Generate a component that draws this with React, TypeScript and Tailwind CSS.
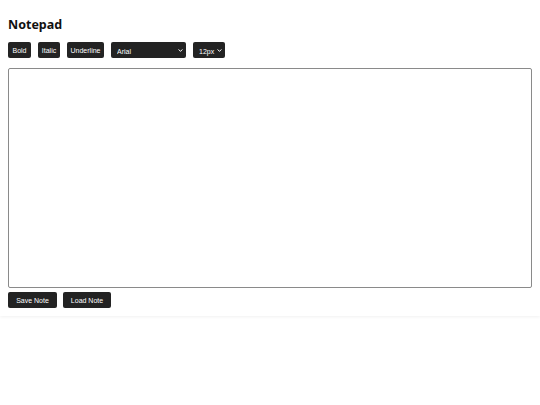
import React from "react";

const Chevron = () => (
  <span className="pointer-events-none absolute inset-y-0 right-[3px] flex items-center">
    <svg className="block" width="5" height="3" viewBox="0 0 5 3">
      <path d="M0.6 0.4 L2.5 2.4 L4.4 0.4" stroke="white" strokeWidth="1" fill="none" />
    </svg>
  </span>
);

const btn =
  "h-[16px] rounded-[2px] bg-[#232323] text-[7px] leading-none text-white [font-family:'Liberation_Sans',Arial,sans-serif]";

const sel =
  "block h-[16px] w-full appearance-none rounded-[2px] border-0 bg-[#232323] pt-[4px] pb-0 pl-[6px] text-[7px] leading-[8px] text-white outline-none [font-family:'Liberation_Sans',Arial,sans-serif]";

export default function App() {
  return (
    <div className="min-h-[405px] bg-white [font-family:'Liberation_Sans',Arial,sans-serif]">
      <div className="bg-white px-[8px] pt-[8px] pb-[8px] shadow-[0_1px_3px_rgba(0,0,0,0.06)]">
        <h1 className="mt-[8px] text-[12.5px] font-bold leading-[18px] text-[#111] [font-family:'Noto_Sans',sans-serif]">
          Notepad
        </h1>
        <div className="mt-[8px] flex h-[16px] items-center gap-[7px]">
          <button className={`${btn} w-[23px]`}>Bold</button>
          <button className={`${btn} w-[22px]`}>Italic</button>
          <button className={`${btn} w-[37px]`}>Underline</button>
          <div className="relative h-[16px] w-[75px]">
            <select className={sel}>
              <option>Arial</option>
            </select>
            <Chevron />
          </div>
          <div className="relative h-[16px] w-[32px]">
            <select className={sel}>
              <option>12px</option>
            </select>
            <Chevron />
          </div>
        </div>
        <textarea className="mt-[10px] block h-[220px] w-[524px] resize-none rounded-[2px] border border-[#8a8a8a] bg-white outline-none" />
        <div className="mt-[4px] flex gap-[6px]">
          <button className={`${btn} w-[49px]`}>Save Note</button>
          <button className={`${btn} w-[48px]`}>Load Note</button>
        </div>
      </div>
    </div>
  );
}
